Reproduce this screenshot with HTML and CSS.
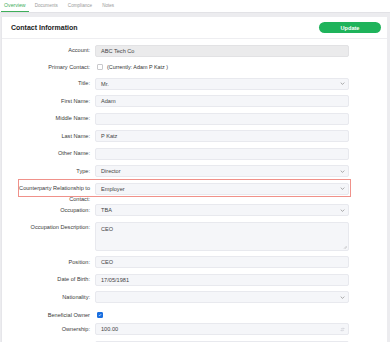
FILE: index.html
```html
<!DOCTYPE html>
<html lang="en">
<head>
  <meta charset="UTF-8">
  <meta name="viewport" content="width=device-width, initial-scale=1.0">
  <title>Contact Information</title>
  <link rel="stylesheet" href="styles.css">
</head>
<body>
  <div class="tabs">
    <span class="tab active">Overview</span>
    <span class="tab">Documents</span>
    <span class="tab">Compliance</span>
    <span class="tab">Notes</span>
  </div>

  <div class="page">
    <div class="card">
      <div class="card-header">
        <h2>Contact Information</h2>
        <button class="update-btn">Update</button>
      </div>

      <div class="card-body">
        <div class="row">
          <label class="label">Account:</label>
          <div class="field readonly">ABC Tech Co</div>
        </div>

        <div class="row row-check">
          <label class="label">Primary Contact:</label>
          <div class="check-wrap">
            <span class="checkbox"></span>
            <span class="check-text">(Currently: Adam P Katz )</span>
          </div>
        </div>

        <div class="row">
          <label class="label">Title:</label>
          <div class="field select">Mr.<svg class="chevron" viewBox="0 0 8 5"><path d="M1 1l3 3 3-3" /></svg></div>
        </div>

        <div class="row">
          <label class="label">First Name:</label>
          <div class="field">Adam</div>
        </div>

        <div class="row">
          <label class="label">Middle Name:</label>
          <div class="field"></div>
        </div>

        <div class="row">
          <label class="label">Last Name:</label>
          <div class="field">P Katz</div>
        </div>

        <div class="row">
          <label class="label">Other Name:</label>
          <div class="field"></div>
        </div>

        <div class="row">
          <label class="label">Type:</label>
          <div class="field select">Director<svg class="chevron" viewBox="0 0 8 5"><path d="M1 1l3 3 3-3" /></svg></div>
        </div>

        <div class="row row-highlight">
          <span class="highlight-box"></span>
          <label class="label">Counterparty Relationship to Contact:</label>
          <div class="field select">Employer<svg class="chevron" viewBox="0 0 8 5"><path d="M1 1l3 3 3-3" /></svg></div>
        </div>

        <div class="row">
          <label class="label">Occupation:</label>
          <div class="field select">TBA<svg class="chevron" viewBox="0 0 8 5"><path d="M1 1l3 3 3-3" /></svg></div>
        </div>

        <div class="row">
          <label class="label">Occupation Description:</label>
          <div class="field textarea">
            <span>CEO</span>
            <svg class="grip" viewBox="0 0 6 6"><path d="M5.5 1.5l-4 4M5.5 3.5l-2 2" /></svg>
          </div>
        </div>

        <div class="row">
          <label class="label">Position:</label>
          <div class="field">CEO</div>
        </div>

        <div class="row">
          <label class="label">Date of Birth:</label>
          <div class="field">17/05/1981</div>
        </div>

        <div class="row">
          <label class="label">Nationality:</label>
          <div class="field select"><span></span><svg class="chevron" viewBox="0 0 8 5"><path d="M1 1l3 3 3-3" /></svg></div>
        </div>

        <div class="row row-owner">
          <label class="label">Beneficial Owner</label>
          <div class="check-wrap">
            <span class="checkbox checked">
              <svg viewBox="0 0 8 8"><path d="M1.8 4.2l1.5 1.5 3-3.4" /></svg>
            </span>
          </div>
        </div>

        <div class="row">
          <label class="label">Ownership:</label>
          <div class="field select">100.00<svg class="spin" viewBox="0 0 8 8"><path d="M1.5 2.5h5M1.5 5.5h5M5 1l1.5 1.5L5 4M3 4L1.5 5.5 3 7" /></svg></div>
        </div>

        <div class="row">
          <label class="label"></label>
          <div class="field"></div>
        </div>
      </div>
    </div>
  </div>
</body>
</html>
```

FILE: styles.css
```css
body {
  margin: 0;
  font-family: "Liberation Sans", Arial, sans-serif;
  background-color: #ececef;
  color: #333;
  overflow: hidden;
}

.tabs {
  display: flex;
  height: 12px;
  background: #fff;
  padding-left: 1px;
  border-bottom: 1px solid #e2e2e6;
}

.tab {
  font-size: 4.6px;
  color: #9a9a9a;
  line-height: 12px;
  margin-right: 10px;
}

.tab.active {
  padding: 0 3px 0 3px;
  margin-right: 6px;
  color: #3fae5a;
  font-size: 5.2px;
  border-bottom: 1.5px solid #3fae5a;
  line-height: 10.5px;
}

.page {
  padding: 4px 3px 0 1px;
}

.card {
  background: #fff;
  border-left: 1px solid #e6e6ea;
  min-height: 400px;
}

.card-header {
  display: flex;
  justify-content: space-between;
  align-items: center;
  height: 21px;
  padding: 0 6px 0 9px;
  border-bottom: 1px solid #eeeef1;
}

.card-header h2 {
  margin: 0;
  font-size: 7px;
  font-weight: bold;
  color: #222;
}

.update-btn {
  width: 62px;
  height: 11px;
  padding: 0;
  border: none;
  border-radius: 6px;
  background-color: #1fb35b;
  color: #fff;
  font-family: inherit;
  font-size: 5.6px;
  font-weight: bold;
  cursor: pointer;
}

.card-body {
  padding-top: 5.5px;
}

.row {
  position: relative;
  display: flex;
  align-items: flex-start;
  margin-bottom: 5.5px;
}

.label {
  width: 93px;
  height: 12px;
  padding: 0.75px 5px 0 0;
  box-sizing: border-box;
  flex-shrink: 0;
  text-align: right;
  font-size: 5.6px;
  line-height: 10.5px;
  color: #3a3a3a;
}

.field {
  display: flex;
  align-items: center;
  justify-content: space-between;
  width: 254px;
  height: 12px;
  box-sizing: border-box;
  padding: 0 3px 0 5px;
  background: #f5f6f9;
  border: 1px solid #e8e9ee;
  border-radius: 2px;
  font-size: 5.6px;
  color: #444;
}

.field.readonly {
  background: #ebebec;
  border-color: #e2e2e4;
}

.chevron {
  width: 5px;
  height: 3px;
  fill: none;
  stroke: #8a8a8a;
  stroke-width: 1.2;
}

.spin {
  width: 5px;
  height: 5px;
  fill: none;
  stroke: #c4c6cc;
  stroke-width: 0.8;
}

.field.textarea {
  height: 29px;
  align-items: flex-start;
  padding-top: 3px;
  padding-right: 1px;
}

.grip {
  width: 4px;
  height: 4px;
  align-self: flex-end;
  margin-bottom: 0.5px;
  fill: none;
  stroke: #999;
  stroke-width: 0.7;
}

.row-check {
  height: 10px;
  align-items: center;
}

.row-check .label,
.row-owner .label {
  height: auto;
  padding-top: 0;
}

.row-owner {
  height: 13px;
  align-items: center;
  margin-bottom: 1.5px;
}

.check-wrap {
  display: flex;
  align-items: center;
  padding-left: 2px;
}

.checkbox {
  display: flex;
  align-items: center;
  justify-content: center;
  width: 4px;
  height: 4px;
  border: 0.7px solid #c9c9cc;
  border-radius: 1px;
  background: #fff;
}

.checkbox.checked {
  background: #1a6fe0;
  border-color: #1a6fe0;
}

.checkbox svg {
  width: 4px;
  height: 4px;
  fill: none;
  stroke: #fff;
  stroke-width: 1.4;
}

.check-text {
  margin-left: 4px;
  font-size: 5.4px;
  color: #333;
}

.row-highlight {
  margin-bottom: 9.5px;
}

.highlight-box {
  position: absolute;
  left: 16px;
  top: -3.5px;
  width: 333px;
  height: 18px;
  box-sizing: border-box;
  border: 1.2px solid #f0918a;
  pointer-events: none;
}
```
